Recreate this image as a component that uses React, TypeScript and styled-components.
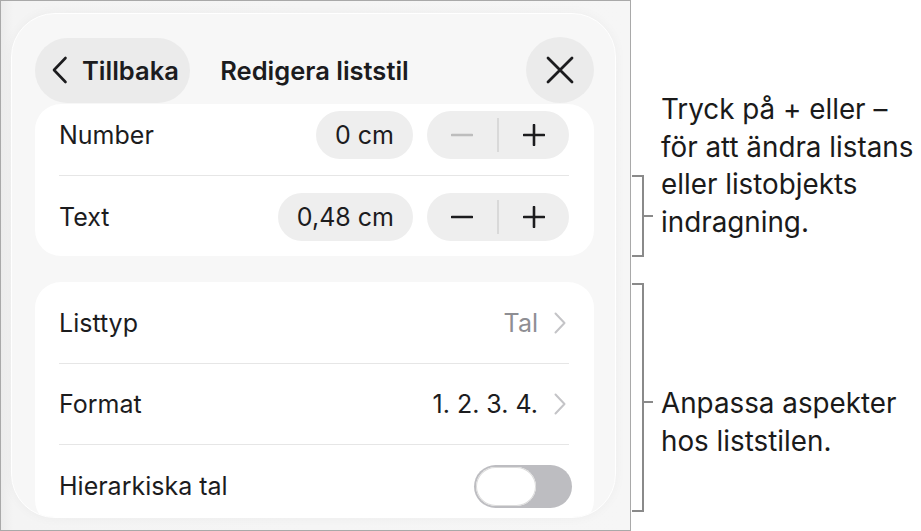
import React from "react";
import styled, { createGlobalStyle } from "styled-components";

const GlobalStyle = createGlobalStyle`
  html, body {
    margin: 0;
    padding: 0;
    background: #ffffff;
  }
  body {
    font-family: "Inter", "Noto Sans", sans-serif;
    color: #1c1c1e;
  }
  * {
    box-sizing: border-box;
  }
`;

const Page = styled.div`
  display: flex;
  width: 921px;
  height: 531px;
  overflow: hidden;
`;

const Device = styled.div`
  width: 631px;
  height: 531px;
  flex: none;
  border: 1px solid #a9a9a9;
  background: linear-gradient(90deg, #ececec 0px, #f4f4f4 12px, #f6f6f6 100%);
  padding: 12px 14px 12px 10px;
  display: flex;
`;

const Popover = styled.div`
  flex: 1;
  display: flex;
  flex-direction: column;
  border-radius: 44px;
  background: #f7f7f7;
  border: 1.5px solid #ffffff;
  box-shadow: 0 0 12px rgba(0, 0, 0, 0.04);
  overflow: hidden;
  padding: 0 21px 0 23px;
`;

const Header = styled.div`
  position: relative;
  z-index: 1;
  display: grid;
  grid-template-columns: 1fr auto 1fr;
  align-items: center;
  padding-top: 23px;
  height: 92px;
`;

const BackButton = styled.button`
  justify-self: start;
  display: flex;
  align-items: center;
  gap: 14px;
  height: 65px;
  padding: 0 11px 0 16px;
  border: none;
  border-radius: 33px;
  background: #ebebeb;
  font-family: inherit;
  font-size: 25.5px;
  font-weight: 600;
  color: #1c1c1e;
`;

const Title = styled.div`
  font-size: 25.5px;
  font-weight: 600;
`;

const CloseButton = styled.button`
  justify-self: end;
  display: flex;
  align-items: center;
  justify-content: center;
  width: 68px;
  height: 66px;
  border: none;
  border-radius: 50%;
  background: #ebebeb;
  padding: 0;
`;

const Card = styled.div<{ $gap?: number }>`
  flex: none;
  background: #ffffff;
  border-radius: 26px;
  padding: 0 25px 0 24px;
  margin-top: ${p => p.$gap ?? 0}px;
`;

const Row = styled.div<{ $top?: number; $bottom?: number; $last?: boolean }>`
  display: flex;
  align-items: center;
  justify-content: space-between;
  min-height: 48px;
  box-sizing: content-box;
  padding: ${p => p.$top ?? 16}px 0 ${p => p.$bottom ?? 16}px;
  border-bottom: ${p => (p.$last ? "none" : "1.5px solid #e6e6e6")};
`;

const Label = styled.span`
  font-size: 25px;
`;

const Controls = styled.div`
  display: flex;
  align-items: center;
  gap: 14px;
`;

const ValuePill = styled.div`
  height: 48px;
  padding: 0 19px;
  border-radius: 24px;
  background: #eeeeee;
  display: flex;
  align-items: center;
  font-size: 25px;
`;

const Stepper = styled.div`
  display: flex;
  align-items: center;
  width: 142px;
  height: 48px;
  border-radius: 24px;
  background: #eeeeee;
`;

const StepButton = styled.div`
  flex: 1;
  height: 100%;
  display: flex;
  align-items: center;
  justify-content: center;
`;

const StepDivider = styled.div`
  width: 1.5px;
  height: 34px;
  background: #d9d9d9;
`;

const Disclosure = styled.div<{ $muted?: boolean }>`
  display: flex;
  align-items: center;
  gap: 16px;
  margin-right: 3px;
  font-size: 25px;
  color: ${p => (p.$muted ? "#8e8e93" : "#1c1c1e")};
`;

const Toggle = styled.div`
  width: 98px;
  height: 43px;
  margin-right: -3px;
  border-radius: 22px;
  background: #bdbdc1;
  padding: 2px;
  display: flex;
`;

const Knob = styled.div`
  width: 60px;
  height: 39px;
  border-radius: 20px;
  background: #ffffff;
  box-shadow: inset 0 0 0 1px #dcdcdc;
`;

const Notes = styled.div`
  flex: 1;
  display: flex;
  flex-direction: column;
  padding-top: 91px;
`;

const NoteGroup = styled.div<{ $gap?: number }>`
  display: flex;
  align-items: flex-start;
  margin-top: ${p => p.$gap ?? 0}px;
`;

const NoteText = styled.p<{ $offset?: number }>`
  margin: ${p => p.$offset ?? 0}px 0 0 6px;
  font-size: 27.8px;
  line-height: 37.5px;
  color: #1a1a1a;
  white-space: nowrap;
`;

const BracketSvg = styled.svg<{ $offset: number }>`
  flex: none;
  margin-top: ${p => p.$offset}px;
  display: block;
`;

const Bracket: React.FC<{ height: number; mid: number; offset: number }> = ({ height, mid, offset }) => (
  <BracketSvg $offset={offset} width="24" height={height} viewBox={`0 0 24 ${height}`}>
    <path
      d={`M1 1 H12 V${height - 1} H1 M12 ${mid} H22`}
      fill="none"
      stroke="#8a8a8a"
      strokeWidth="2"
    />
  </BracketSvg>
);

const Minus: React.FC<{ disabled?: boolean }> = ({ disabled }) => (
  <svg width="22" height="22" viewBox="0 0 22 22">
    <path d="M1 11 H21" stroke={disabled ? "#bdbdbd" : "#1c1c1e"} strokeWidth="2.6" strokeLinecap="round" />
  </svg>
);

const Plus: React.FC = () => (
  <svg width="22" height="22" viewBox="0 0 22 22">
    <path d="M1 11 H21 M11 1 V21" stroke="#1c1c1e" strokeWidth="2.6" strokeLinecap="round" />
  </svg>
);

const Chevron: React.FC = () => (
  <svg width="12" height="22" viewBox="0 0 12 22">
    <path d="M1.5 1.5 L10.5 11 L1.5 20.5" fill="none" stroke="#c4c4c7" strokeWidth="2" strokeLinecap="round" strokeLinejoin="round" />
  </svg>
);

const StepperControl: React.FC<{ minusDisabled?: boolean }> = ({ minusDisabled }) => (
  <Stepper>
    <StepButton>
      <Minus disabled={minusDisabled} />
    </StepButton>
    <StepDivider />
    <StepButton>
      <Plus />
    </StepButton>
  </Stepper>
);

const App: React.FC = () => {
  return (
    <Page>
      <GlobalStyle />
      <Device>
        <Popover>
          <Header>
            <BackButton>
              <svg width="17" height="28" viewBox="0 0 17 28">
                <path d="M14.5 2 L3 14 L14.5 26" fill="none" stroke="#1c1c1e" strokeWidth="2.6" strokeLinecap="round" strokeLinejoin="round" />
              </svg>
              Tillbaka
            </BackButton>
            <Title>Redigera liststil</Title>
            <CloseButton>
              <svg width="28" height="28" viewBox="0 0 28 28">
                <path d="M2 2 L26 26 M26 2 L2 26" stroke="#1c1c1e" strokeWidth="2.8" strokeLinecap="round" />
              </svg>
            </CloseButton>
          </Header>

          <Card $gap={1}>
            <Row $top={7} $bottom={16}>
              <Label>Number</Label>
              <Controls>
                <ValuePill>0 cm</ValuePill>
                <StepperControl minusDisabled />
              </Controls>
            </Row>
            <Row $top={17} $bottom={15} $last>
              <Label>Text</Label>
              <Controls>
                <ValuePill>0,48 cm</ValuePill>
                <StepperControl />
              </Controls>
            </Row>
          </Card>

          <Card $gap={26}>
            <Row $top={17}>
              <Label>Listtyp</Label>
              <Disclosure $muted>
                Tal
                <Chevron />
              </Disclosure>
            </Row>
            <Row $top={16}>
              <Label>Format</Label>
              <Disclosure>
                1. 2. 3. 4.
                <Chevron />
              </Disclosure>
            </Row>
            <Row $top={17} $last>
              <Label>Hierarkiska tal</Label>
              <Toggle>
                <Knob />
              </Toggle>
            </Row>
          </Card>
        </Popover>
      </Device>

      <Notes>
        <NoteGroup>
          <Bracket height={82} mid={41} offset={84} />
          <NoteText>
            Tryck på + eller –<br />
            för att ändra listans<br />
            eller listobjekts<br />
            indragning.
          </NoteText>
        </NoteGroup>
        <NoteGroup $gap={26}>
          <Bracket height={229} mid={119} offset={0} />
          <NoteText $offset={102}>
            Anpassa aspekter<br />
            hos liststilen.
          </NoteText>
        </NoteGroup>
      </Notes>
    </Page>
  );
};

export default App;
